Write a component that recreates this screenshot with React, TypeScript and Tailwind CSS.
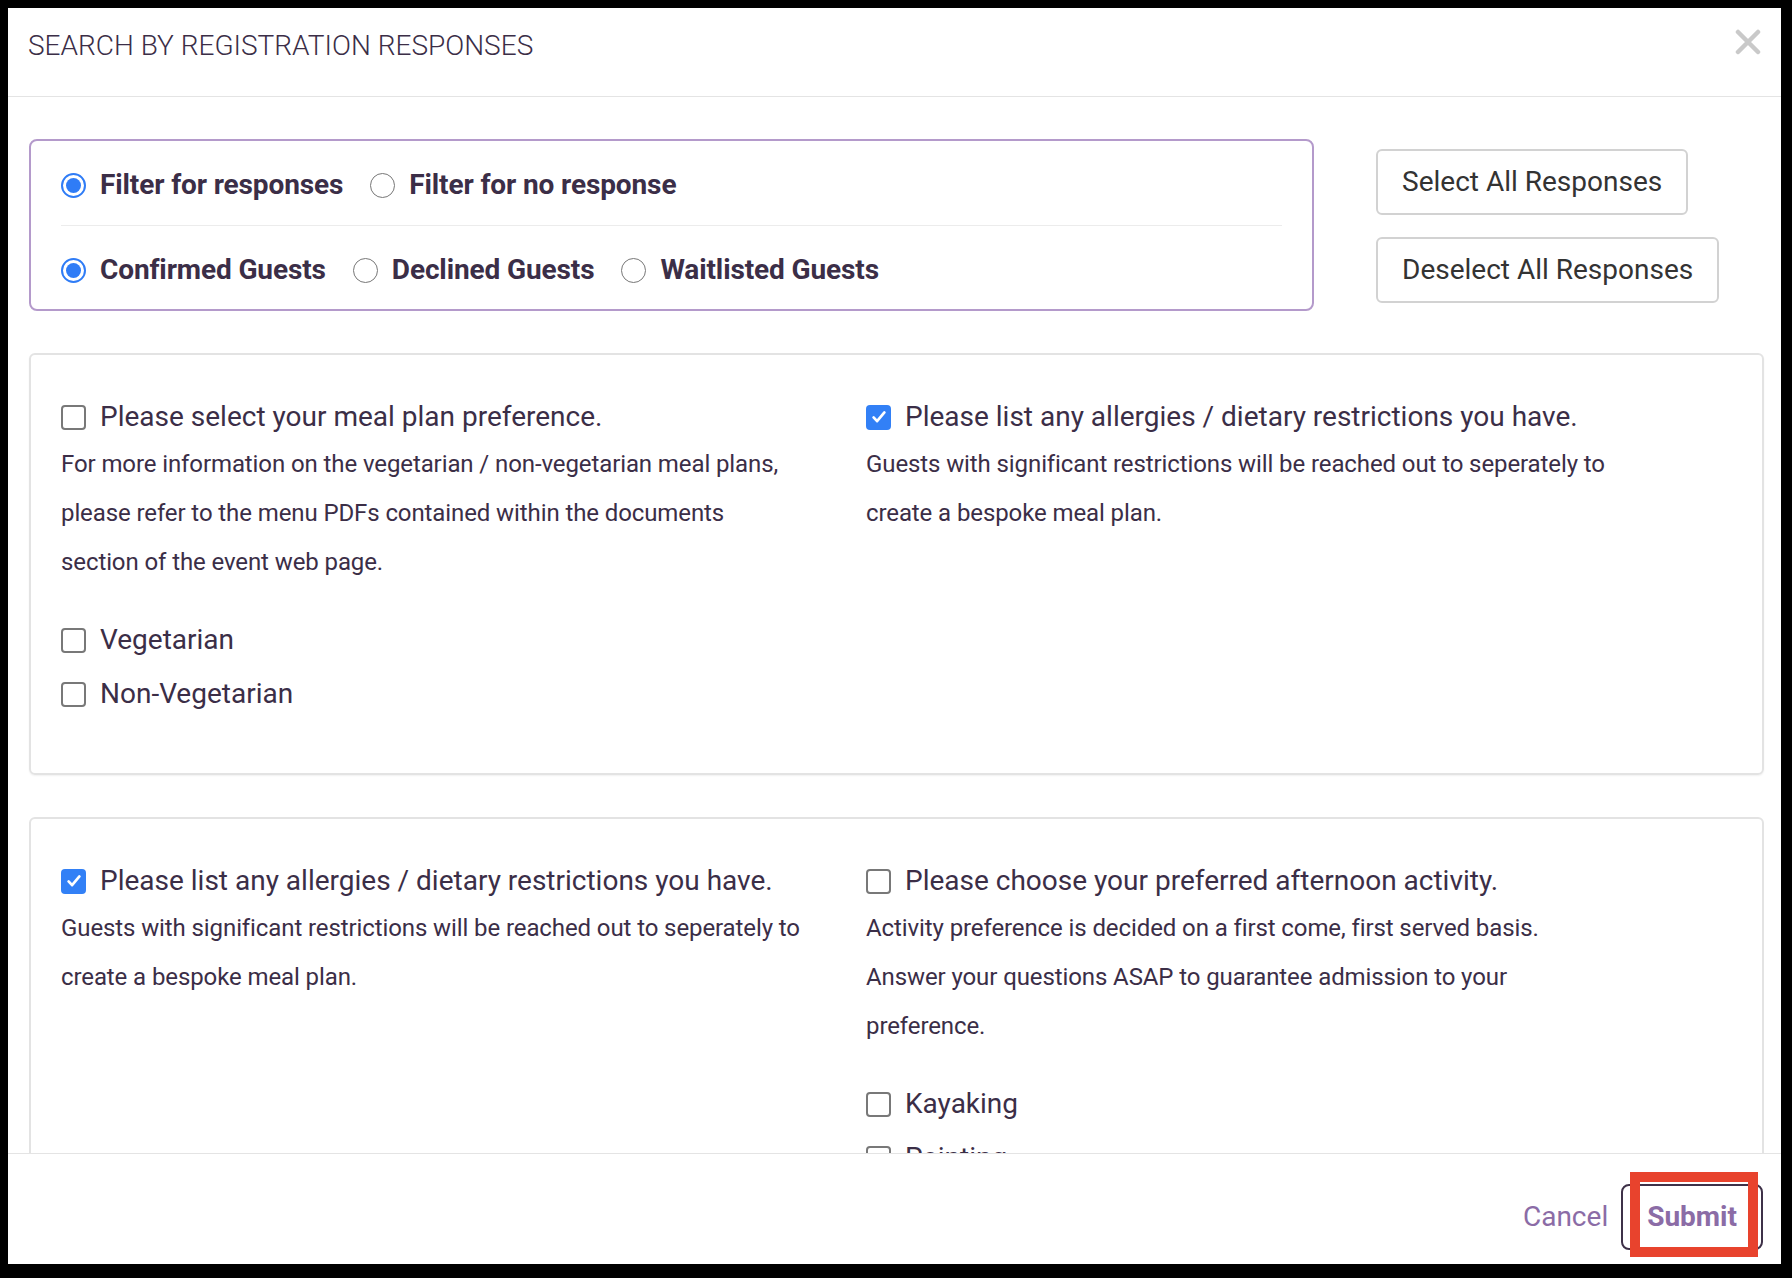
import React from "react";

function Radio({ checked, label }: { checked?: boolean; label: string }) {
  return (
    <label className="flex items-center gap-[14px]">
      {checked ? (
        <span className="w-[25px] h-[25px] rounded-full border-2 border-[#2f7cf6] flex items-center justify-center">
          <span className="w-[15px] h-[15px] rounded-full bg-[#2f7cf6]" />
        </span>
      ) : (
        <span className="w-[25px] h-[25px] rounded-full border-[1.5px] border-[#777777]" />
      )}
      <span className="text-[28px] leading-[34px] font-bold tracking-[-0.12px]">{label}</span>
    </label>
  );
}

function Checkbox({ checked, label }: { checked?: boolean; label: string }) {
  return (
    <label className="flex items-center gap-[14px] h-[34px]">
      {checked ? (
        <span className="w-[25px] h-[25px] rounded-[4px] bg-[#3280f6] flex items-center justify-center">
          <svg viewBox="0 0 24 24" className="w-[20px] h-[20px]" fill="none">
            <path d="M5.5 12.5l4.2 4.5L18.5 6.5" stroke="#fff" strokeWidth="3.2" strokeLinecap="round" strokeLinejoin="round" />
          </svg>
        </span>
      ) : (
        <span className="w-[25px] h-[25px] rounded-[4px] border-2 border-[#787878] bg-white" />
      )}
      <span className="text-[28px] leading-[34px]">{label}</span>
    </label>
  );
}

function Question({
  checked,
  title,
  lines,
  options,
}: {
  checked?: boolean;
  title: string;
  lines: string[];
  options?: string[];
}) {
  return (
    <div>
      <Checkbox checked={checked} label={title} />
      <p className="mt-[6px] text-[24px] leading-[49px] tracking-[-0.1px]">
        {lines.map((l, i) => (
          <React.Fragment key={i}>
            {i > 0 && <br />}
            {l}
          </React.Fragment>
        ))}
      </p>
      {options && (
        <div className="mt-[36px] flex flex-col gap-[20px]">
          {options.map((o) => (
            <Checkbox key={o} label={o} />
          ))}
        </div>
      )}
    </div>
  );
}

export default function App() {
  return (
    <div className="w-[1792px] h-[1278px] bg-black pt-[8px] pl-[8px] pr-[11px] pb-[14px] font-['Roboto',sans-serif]">
      <div className="h-full bg-white flex flex-col text-[#3b2e47]">
        {/* Header */}
        <div className="h-[89px] shrink-0 border-b border-[#e4e4e4] flex items-start justify-between pt-[21px] pl-[20px] pr-[20px]">
          <h1 className="text-[28px] leading-[33px] font-light">SEARCH BY REGISTRATION RESPONSES</h1>
          <svg viewBox="0 0 26 26" className="w-[26px] h-[26px]" fill="none">
            <path d="M3 3L23 23M23 3L3 23" stroke="#c9c9c9" strokeWidth="4.5" strokeLinecap="round" />
          </svg>
        </div>

        {/* Body */}
        <div className="flex-1 overflow-hidden pl-[21px] pr-[17px] pt-[42px]">
          <div className="flex items-start">
            <div className="w-[1285px] border-2 border-[#b49acb] rounded-lg px-[30px] pt-[27px] pb-[22px]">
              <div className="flex items-center gap-[27px]">
                <Radio checked label="Filter for responses" />
                <Radio label="Filter for no response" />
              </div>
              <div className="mt-[23px] mb-[27px] border-t border-[#ececec]" />
              <div className="flex items-center gap-[27px]">
                <Radio checked label="Confirmed Guests" />
                <Radio label="Declined Guests" />
                <Radio label="Waitlisted Guests" />
              </div>
            </div>
            <div className="ml-[62px] mt-[10px] flex flex-col items-start gap-[22px]">
              <button className="h-[66px] px-6 border-2 border-[#d2d2d2] rounded-md text-[28px] text-[#333333]">
                Select All Responses
              </button>
              <button className="h-[66px] px-6 border-2 border-[#d2d2d2] rounded-md text-[28px] text-[#333333]">
                Deselect All Responses
              </button>
            </div>
          </div>

          <div className="mt-[42px] border-2 border-[#e3e3e3] rounded-md shadow-[0_1px_2px_rgba(0,0,0,0.06)] px-[30px] pt-[45px] pb-[62px] grid grid-cols-[748px_748px] gap-x-[57px] items-start">
            <Question
              title="Please select your meal plan preference."
              lines={[
                "For more information on the vegetarian / non-vegetarian meal plans,",
                "please refer to the menu PDFs contained within the documents",
                "section of the event web page.",
              ]}
              options={["Vegetarian", "Non-Vegetarian"]}
            />
            <Question
              checked
              title="Please list any allergies / dietary restrictions you have."
              lines={[
                "Guests with significant restrictions will be reached out to seperately to",
                "create a bespoke meal plan.",
              ]}
            />
          </div>

          <div className="mt-[42px] border-2 border-[#e3e3e3] rounded-md px-[30px] pt-[45px] pb-[62px] grid grid-cols-[748px_748px] gap-x-[57px] items-start">
            <Question
              checked
              title="Please list any allergies / dietary restrictions you have."
              lines={[
                "Guests with significant restrictions will be reached out to seperately to",
                "create a bespoke meal plan.",
              ]}
            />
            <Question
              title="Please choose your preferred afternoon activity."
              lines={[
                "Activity preference is decided on a first come, first served basis.",
                "Answer your questions ASAP to guarantee admission to your",
                "preference.",
              ]}
              options={["Kayaking", "Painting", "Hiking"]}
            />
          </div>
        </div>

        {/* Footer */}
        <div className="h-[111px] shrink-0 border-t border-[#e4e4e4] flex items-start justify-end pt-[30px] pr-[18px]">
          <div className="flex items-center gap-[13px]">
            <button className="text-[28px] leading-[66px] text-[#8b6ca6]">Cancel</button>
            <div className="relative">
              <button className="h-[66px] px-6 border-2 border-[#3e3148] rounded-lg text-[28px] font-bold text-[#8b6ca6]">
                Submit
              </button>
              <div className="absolute left-[9px] top-[-12px] w-[128px] h-[85px] border-[10px] border-[#e8432d]" />
            </div>
          </div>
        </div>
      </div>
    </div>
  );
}
